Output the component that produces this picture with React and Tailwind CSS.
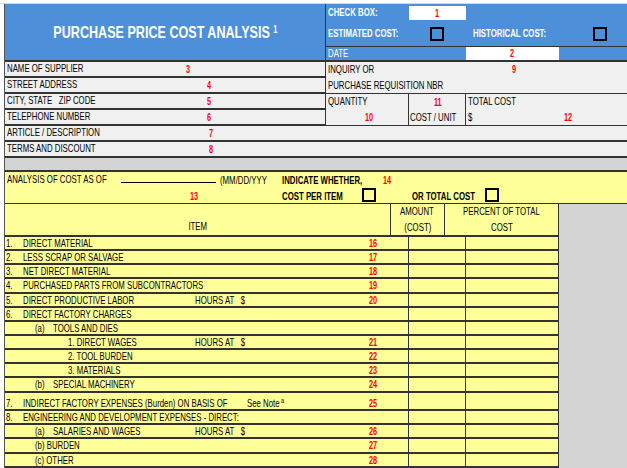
const F = { fontFamily: '"Liberation Sans", Arial, sans-serif' };
function T({ c = "", children, o = "origin-left" }) {
  return <span className={`inline-block whitespace-pre scale-x-[0.68] ${o} ${c}`}>{children}</span>;
}
function R({ children }) {
  return <span className="text-[#ff0000] text-[11px] font-bold inline-block scale-x-[0.66]">{children}</span>;
}
const Box = ({ c = "" }) => <div className={`w-[14px] h-[14px] border-2 border-black ${c}`} />;

const rows = [
  ["1.", "DIRECT MATERIAL", "", "16", 14, 0],
  ["2.", "LESS SCRAP OR SALVAGE", "", "17", 14, 0],
  ["3.", "NET DIRECT MATERIAL", "", "18", 14, 0],
  ["4.", "PURCHASED PARTS FROM SUBCONTRACTORS", "", "19", 15, 0],
  ["5.", "DIRECT PRODUCTIVE LABOR", "HOURS AT   $", "20", 14, 0],
  ["6.", "DIRECT FACTORY CHARGES", "", "", 14, 0],
  ["(a)", "TOOLS AND DIES", "", "", 14, 1],
  ["", "1. DIRECT WAGES", "HOURS AT   $", "21", 14, 2],
  ["", "2. TOOL BURDEN", "", "22", 14, 2],
  ["", "3. MATERIALS", "", "23", 14, 2],
  ["(b)", "SPECIAL MACHINERY", "", "24", 15, 1],
  ["7.", "INDIRECT FACTORY EXPENSES (Burden) ON BASIS OF", "See Note", "25", 18, 3],
  ["8.", "ENGINEERING AND DEVELOPMENT EXPENSES - DIRECT:", "", "", 14, 0],
  ["(a)", "SALARIES AND WAGES", "HOURS AT   $", "26", 14, 1],
  ["", "(b) BURDEN", "", "27", 15, 4],
  ["", "(c) OTHER", "", "28", 14, 4],
];

export default function App() {
  return (
    <div style={F} className="w-[627px] h-[468px] overflow-hidden bg-white text-[11.5px] text-black leading-none">
      <div className="h-[4px] bg-white border-b border-[#d8d8d8]" />
      <div className="ml-[4px] border-l border-[#555]">
        <div className="flex h-[58px] bg-[#4d90d9] text-white border-b-2 border-[#333]">
          <div className="w-[321px] flex items-center justify-center border-r border-[#333]">
            <span className="inline-block scale-x-[0.74] whitespace-nowrap font-bold text-[17px]">PURCHASE PRICE COST ANALYSIS <sup className="text-[10px]">1</sup></span>
          </div>
          <div className="flex-1 flex flex-col font-bold">
            <div className="h-[18px] flex items-center">
              <div className="w-[83px] pl-[2px]"><T>CHECK BOX:</T></div>
              <div className="w-[57px] h-[14px] bg-white flex items-center justify-center"><R>1</R></div>
            </div>
            <div className="h-[24px] flex items-center">
              <div className="w-[104px] pl-[2px]"><T>ESTIMATED COST:</T></div>
              <Box />
              <div className="w-[29px]" />
              <div className="w-[120px]"><T>HISTORICAL COST:</T></div>
              <Box />
            </div>
            <div className="flex-1 flex items-center border-t border-[#333]">
              <div className="w-[140px] pl-[2px] font-normal"><T>DATE</T></div>
              <div className="w-[93px] h-full bg-white flex items-center justify-center"><R>2</R></div>
            </div>
          </div>
        </div>
        <div className="bg-[#f0f0f0]">
          <div className="flex">
            <div className="w-[321px] border-r border-[#333]">
              {[["NAME OF SUPPLIER", "3", 180], ["STREET ADDRESS", "4", 201], ["CITY, STATE   ZIP CODE", "5", 201], ["TELEPHONE NUMBER", "6", 201]].map(([l, n, x], i) => (
                <div key={i} className="h-[16px] flex items-center border-b-2 border-[#333] relative pl-[2px]">
                  <T>{l}</T>
                  <span className="absolute top-[2px]" style={{ left: x }}><R>{n}</R></span>
                </div>
              ))}
            </div>
            <div className="flex-1">
              <div className="h-[32px] border-b border-[#333] relative pl-[2px]">
                <div className="h-[16px] flex items-center"><T>INQUIRY OR</T></div>
                <div className="h-[16px] flex items-center"><T>PURCHASE REQUISITION NBR</T></div>
                <span className="absolute left-[185px] top-[2px]"><R>9</R></span>
              </div>
              <div className="h-[32px] flex border-b border-[#333]">
                <div className="w-[83px] border-r border-[#333] pl-[2px] relative">
                  <div className="h-[16px] flex items-center"><T>QUANTITY</T></div>
                  <span className="absolute left-[37px] top-[18px]"><R>10</R></span>
                </div>
                <div className="w-[57px] border-r border-[#333] pl-[1px]">
                  <div className="h-[16px] flex items-center justify-center"><R>11</R></div>
                  <div className="h-[16px] flex items-center"><T>COST / UNIT</T></div>
                </div>
                <div className="flex-1 pl-[2px] relative">
                  <div className="h-[16px] flex items-center"><T>TOTAL COST</T></div>
                  <div className="h-[16px] flex items-center"><T>$</T></div>
                  <span className="absolute left-[96px] top-[18px]"><R>12</R></span>
                </div>
              </div>
            </div>
          </div>
          {[["ARTICLE / DESCRIPTION", "7"], ["TERMS AND DISCOUNT", "8"]].map(([l, n], i) => (
            <div key={i} className="h-[16px] flex items-center border-b-2 border-[#333] relative pl-[2px]">
              <T>{l}</T>
              <span className="absolute left-[203px] top-[2px]"><R>{n}</R></span>
            </div>
          ))}
        </div>
        <div className="h-[14px] bg-[#d4d4d4] border-b-2 border-[#333]" />
        <div className="h-[32px] bg-[#ffff99] relative border-b border-[#333]">
          <div className="h-[16px] flex items-center pl-[2px]">
            <T>ANALYSIS OF COST AS OF</T>
            <span className="absolute left-[116px] top-[10px] w-[95px] border-b border-black" />
            <span className="absolute left-[215px] top-[3px]"><T>(MM/DD/YYY</T></span>
            <span className="absolute left-[277px] top-[3px] font-bold"><T>INDICATE WHETHER,</T></span>
            <span className="absolute left-[376px] top-[3px]"><R>14</R></span>
          </div>
          <span className="absolute left-[183px] top-[19px]"><R>13</R></span>
          <span className="absolute left-[277px] top-[19px] font-bold"><T>COST PER ITEM</T></span>
          <Box c="absolute left-[357px] top-[16px]" />
          <span className="absolute left-[407px] top-[19px] font-bold"><T>OR TOTAL COST</T></span>
          <Box c="absolute left-[480px] top-[16px]" />
        </div>
        <div className="flex">
          <div className="w-[554px] bg-[#ffff99]">
            <div className="h-[33px] flex border-b-2 border-[#333]">
              <div className="w-[404px] border-r border-[#333] flex items-end justify-center pb-[3px]"><T o="origin-center">ITEM</T></div>
              <div className="w-[57px] border-r border-[#333] flex flex-col items-center justify-around"><T o="origin-center">AMOUNT</T><T o="origin-center">(COST)</T></div>
              <div className="flex-1 border-r border-[#333] flex flex-col items-center justify-around"><T o="origin-center">PERCENT OF TOTAL</T><T o="origin-center">COST</T></div>
            </div>
            {rows.map(([num, label, mid, red, h, ind], i) => (
              <div key={i} className="flex border-b-2 border-[#333]" style={{ height: h }}>
                <div className="w-[404px] border-r border-[#333] relative flex items-center">
                  {ind === 2 || ind === 4 ? (
                    <span className="absolute top-[1px]" style={{ left: ind === 2 ? 63 : 30 }}><T>{label}</T></span>
                  ) : (
                    <>
                      <span className="absolute" style={{ top: ind === 3 ? 5 : 1, left: ind === 1 ? 30 : 1 }}><T>{num}</T></span>
                      <span className="absolute" style={{ top: ind === 3 ? 5 : 1, left: ind === 1 ? 48 : 18 }}><T>{label}</T></span>
                    </>
                  )}
                  {mid && (
                    <span className="absolute" style={{ top: ind === 3 ? 5 : 1, left: mid === "See Note" ? 242 : 190 }}>
                      <T>{mid}{mid === "See Note" && <sup className="text-[8px] ml-[2px]">a</sup>}</T>
                    </span>
                  )}
                  {red && <span className="absolute left-[362px]" style={{ top: ind === 3 ? 5 : 1 }}><R>{red}</R></span>}
                </div>
                <div className="w-[57px] border-r border-[#333]" />
                <div className="flex-1 border-r border-[#333]" />
              </div>
            ))}
          </div>
          <div className="flex-1 bg-[#d4d4d4]" />
        </div>
      </div>
    </div>
  );
}
